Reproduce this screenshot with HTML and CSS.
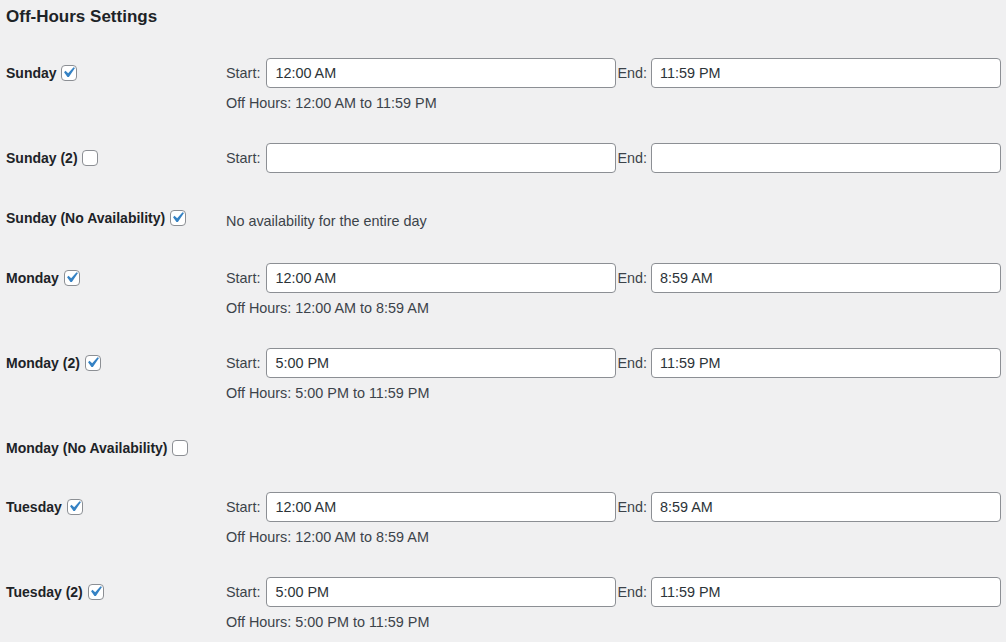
FILE: index.html
```html
<!DOCTYPE html>
<html>
<head>
<meta charset="utf-8">
<link rel="stylesheet" href="styles.css">
</head>
<body>
<div class="wrap">
  <h2 class="title">Off-Hours Settings</h2>
  <div class="form">
    <div class="row">
      <div class="th">Sunday <span class="cb checked"><svg viewBox="0 0 20 20"><path d="M14.83 4.89l1.34.94-5.81 8.38H9.02L5.78 9.67l1.34-1.25 2.57 2.4z"/></svg></span></div>
      <div class="td">
        <div class="fields"><span class="lbl">Start:</span><span class="input">12:00 AM</span><span class="lbl end">End:</span><span class="input">11:59 PM</span></div>
        <p class="desc">Off Hours: 12:00 AM to 11:59 PM</p>
      </div>
    </div>
    <div class="row">
      <div class="th">Sunday (2) <span class="cb"></span></div>
      <div class="td">
        <div class="fields"><span class="lbl">Start:</span><span class="input"></span><span class="lbl end">End:</span><span class="input"></span></div>
      </div>
    </div>
    <div class="row">
      <div class="th">Sunday (No Availability) <span class="cb checked"><svg viewBox="0 0 20 20"><path d="M14.83 4.89l1.34.94-5.81 8.38H9.02L5.78 9.67l1.34-1.25 2.57 2.4z"/></svg></span></div>
      <div class="td note-cell"><span class="note">No availability for the entire day</span></div>
    </div>
    <div class="row">
      <div class="th">Monday <span class="cb checked"><svg viewBox="0 0 20 20"><path d="M14.83 4.89l1.34.94-5.81 8.38H9.02L5.78 9.67l1.34-1.25 2.57 2.4z"/></svg></span></div>
      <div class="td">
        <div class="fields"><span class="lbl">Start:</span><span class="input">12:00 AM</span><span class="lbl end">End:</span><span class="input">8:59 AM</span></div>
        <p class="desc">Off Hours: 12:00 AM to 8:59 AM</p>
      </div>
    </div>
    <div class="row">
      <div class="th">Monday (2) <span class="cb checked"><svg viewBox="0 0 20 20"><path d="M14.83 4.89l1.34.94-5.81 8.38H9.02L5.78 9.67l1.34-1.25 2.57 2.4z"/></svg></span></div>
      <div class="td">
        <div class="fields"><span class="lbl">Start:</span><span class="input">5:00 PM</span><span class="lbl end">End:</span><span class="input">11:59 PM</span></div>
        <p class="desc">Off Hours: 5:00 PM to 11:59 PM</p>
      </div>
    </div>
    <div class="row">
      <div class="th">Monday (No Availability) <span class="cb"></span></div>
      <div class="td empty"></div>
    </div>
    <div class="row">
      <div class="th">Tuesday <span class="cb checked"><svg viewBox="0 0 20 20"><path d="M14.83 4.89l1.34.94-5.81 8.38H9.02L5.78 9.67l1.34-1.25 2.57 2.4z"/></svg></span></div>
      <div class="td">
        <div class="fields"><span class="lbl">Start:</span><span class="input">12:00 AM</span><span class="lbl end">End:</span><span class="input">8:59 AM</span></div>
        <p class="desc">Off Hours: 12:00 AM to 8:59 AM</p>
      </div>
    </div>
    <div class="row">
      <div class="th">Tuesday (2) <span class="cb checked"><svg viewBox="0 0 20 20"><path d="M14.83 4.89l1.34.94-5.81 8.38H9.02L5.78 9.67l1.34-1.25 2.57 2.4z"/></svg></span></div>
      <div class="td">
        <div class="fields"><span class="lbl">Start:</span><span class="input">5:00 PM</span><span class="lbl end">End:</span><span class="input">11:59 PM</span></div>
        <p class="desc">Off Hours: 5:00 PM to 11:59 PM</p>
      </div>
    </div>
  </div>
</div>
</body>
</html>
```

FILE: styles.css
```css
html, body {
  margin: 0;
  padding: 0;
  background: #f0f0f1;
}
body {
  font-family: "Liberation Sans", Arial, sans-serif;
  color: #3c434a;
  font-size: 14px;
  overflow: hidden;
}
.wrap {
  padding: 0 6px;
}
.title {
  font-size: 17px;
  font-weight: 700;
  color: #1d2327;
  line-height: 24px;
  margin: 5px 0 14px;
}
.row {
  display: grid;
  grid-template-columns: 210px 1fr;
}
.th {
  padding: 21px 10px 19px 0;
  font-weight: 700;
  color: #1d2327;
  line-height: 19px;
  font-size: 14px;
}
.cb {
  position: relative;
  display: inline-block;
  width: 16px;
  height: 16px;
  box-sizing: border-box;
  border: 1px solid #8c8f94;
  border-radius: 4px;
  background: #fff;
  vertical-align: -3px;
  margin-left: 1px;
}
.cb svg {
  position: absolute;
  left: -4px;
  top: -4px;
  width: 21px;
  height: 21px;
  fill: #3582c4;
}
.td {
  padding: 15px 10px;
}
.fields {
  display: flex;
  align-items: center;
  height: 30px;
}
.lbl {
  margin-right: 6px;
  line-height: 30px;
  font-size: 14.4px;
}
.lbl.end {
  margin-left: 1px;
  margin-right: 4px;
}
.input {
  display: block;
  box-sizing: border-box;
  width: 350px;
  height: 30px;
  border: 1px solid #8c8f94;
  border-radius: 4px;
  background: #fff;
  padding: 0 8px;
  line-height: 28px;
  color: #2c3338;
  font-size: 14.4px;
}
.desc {
  margin: 5px 0 0;
  font-size: 14.4px;
  line-height: 20px;
  color: #3c434a;
}
.note-cell {
  padding: 18px 10px 12px;
}
.note {
  font-size: 14.4px;
  line-height: 30px;
  display: block;
}
```
